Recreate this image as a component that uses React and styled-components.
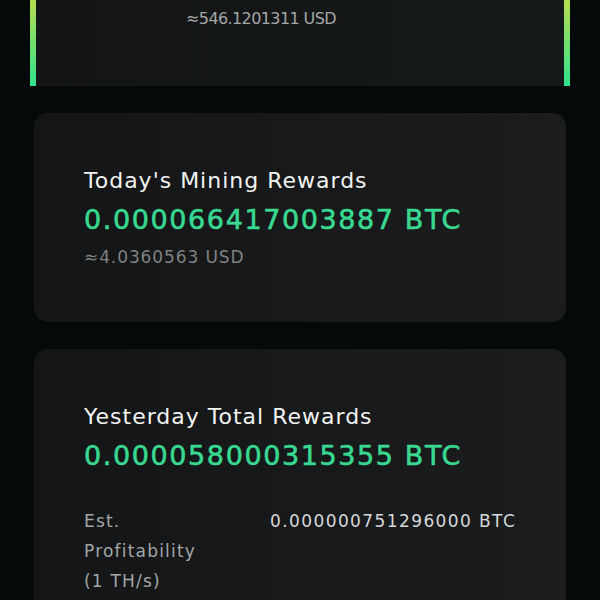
import React from "react";
import styled, { createGlobalStyle } from "styled-components";

const GlobalStyle = createGlobalStyle`
	html, body {
		margin: 0;
		padding: 0;
		background: #050909;
		font-family: "DejaVu Sans", "Open Sans", sans-serif;
	}
`;

const App = () => {
	return (
		<>
			<GlobalStyle />
			<Page>
				<TopCard>
					<TopValue>≈546.1201311 USD</TopValue>
				</TopCard>

				<Card>
					<Title>Today's Mining Rewards</Title>
					<Amount>0.000066417003887 BTC</Amount>
					<Usd>≈4.0360563 USD</Usd>
				</Card>

				<Card tall>
					<Title>Yesterday Total Rewards</Title>
					<Amount>0.000058000315355 BTC</Amount>
					<Row>
						<Label>
							Est.
							<br />
							Profitability
							<br />
							(1 TH/s)
						</Label>
						<Value>0.000000751296000 BTC</Value>
					</Row>
				</Card>
			</Page>
		</>
	);
};

export default App;

const Page = styled.div`
	height: 600px;
	overflow: hidden;
	padding: 0 34px;
	display: flex;
	flex-direction: column;
	gap: 27px;
`;

const TopCard = styled.div`
	height: 86px;
	flex-shrink: 0;
	box-sizing: border-box;
	border-style: solid;
	border-width: 0 6px;
	border-image: linear-gradient(to bottom, #b8dc4e, #2ee28e) 1;
	background: linear-gradient(to right, #121415, #16191a);
	display: flex;
	padding-left: 150px;
	margin: 0 -4px;
`;

const TopValue = styled.div`
	margin-top: 9px;
	font-size: 16px;
	color: #a3a6a7;
	letter-spacing: -0.6px;
`;

const Card = styled.div`
	flex-shrink: 0;
	box-sizing: border-box;
	height: ${({ tall }) => (tall ? "300px" : "209px")};
	border-radius: 14px;
	background: linear-gradient(to right, #131516, #1a1c1d);
	padding: 53px 50px 0;
	display: flex;
	flex-direction: column;
`;

const Title = styled.div`
	font-size: 22px;
	line-height: 30px;
	color: #f2f3f3;
	letter-spacing: 1px;
`;

const Amount = styled.div`
	margin-top: 6px;
	font-size: 27px;
	line-height: 36px;
	color: #38d891;
	letter-spacing: 1.6px;
	-webkit-text-stroke: 0.6px #38d891;
`;

const Usd = styled.div`
	margin-top: 7px;
	font-size: 17px;
	line-height: 24px;
	color: #7e8283;
	letter-spacing: 0.9px;
`;

const Row = styled.div`
	margin-top: 32px;
	display: flex;
`;

const Label = styled.div`
	width: 186px;
	flex-shrink: 0;
	font-size: 17px;
	line-height: 30px;
	color: #a3a6a7;
	letter-spacing: 1.2px;
`;

const Value = styled.div`
	white-space: nowrap;
	font-size: 17px;
	line-height: 30px;
	color: #d6d8d9;
	letter-spacing: 1.4px;
`;
